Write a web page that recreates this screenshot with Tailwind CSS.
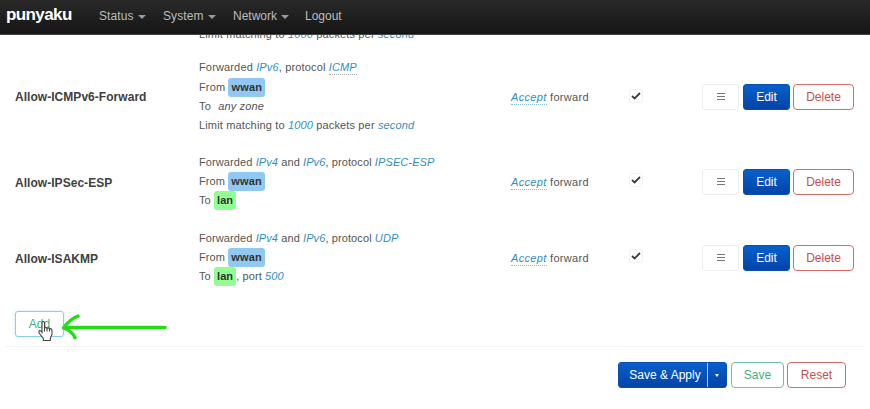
<!DOCTYPE html>
<html lang="en">
<head>
    <meta charset="UTF-8">
    <meta name="viewport" content="width=device-width, initial-scale=1.0">
    <script src="https://cdn.jsdelivr.net/npm/@tailwindcss/browser@4"></script>
    <title>punyaku - Firewall</title>
</head>
<body class="h-[409px] overflow-hidden bg-white font-['Liberation_Sans',Arial,sans-serif] text-[11px] text-[#555]">
    <header class="relative z-10 flex h-[35px] items-center border-b border-[#444] bg-linear-to-b from-[#2a2a2a] to-[#151515] pb-0.5 pl-1.5 text-[12px] text-[#bcbcbc]">
        <a href="#" class="w-[93px] pb-0.5 text-[17px] font-bold tracking-[-0.6px] text-white">punyaku</a>
        <nav class="flex items-center">
            <a href="#" class="flex w-16 items-center gap-1"><span class="tracking-[0.1px]">Status</span><span class="mt-0.5 border-x-4 border-t-4 border-x-transparent border-t-[#999]"></span></a>
            <a href="#" class="flex w-[70px] items-center gap-1"><span class="tracking-[0.1px]">System</span><span class="mt-0.5 border-x-4 border-t-4 border-x-transparent border-t-[#999]"></span></a>
            <a href="#" class="flex w-[72px] items-center gap-1"><span>Network</span><span class="mt-0.5 border-x-4 border-t-4 border-x-transparent border-t-[#999]"></span></a>
            <a href="#">Logout</a>
        </nav>
    </header>

    <main class="-mt-[13px]">
        <!-- tail of the rule that is scrolled under the header -->
        <div class="h-[27.5px] pt-[3px] pl-[199px] leading-[19.33px] tracking-[0.15px]">
            <p>Limit matching to <i class="text-[#2f8fc0]">1000</i> packets per <i class="text-[#2f8fc0]">second</i></p>
        </div>

        <div class="flex h-[95px] items-center pl-[15px]">
            <div class="w-[184px] text-[12px] font-bold tracking-[0.04px] text-[#404040]">Allow-ICMPv6-Forward</div>
            <div class="w-[312px] leading-[19.33px] tracking-[0.15px]">
                <p>Forwarded <i class="text-[#2f8fc0]">IPv6</i>, protocol <i class="inline-block border-b border-dotted border-[#aaa] leading-[14px] text-[#2f8fc0]">ICMP</i></p>
                <p>From <b class="inline-block rounded-[3px] bg-[#90c8f2] px-[3px] leading-[19px] text-[#333]">wwan</b></p>
                <p>To <i class="ml-1">any zone</i></p>
                <p>Limit matching to <i class="text-[#2f8fc0]">1000</i> packets per <i class="text-[#2f8fc0]">second</i></p>
            </div>
            <div class="w-[118px] tracking-[0.33px]"><i class="inline-block border-b border-dotted border-[#8bbdd6] leading-[13px] text-[#2f8fc0]">Accept</i> forward</div>
            <div class="w-[73px]">
                <span class="mb-[3px] flex size-[14px] items-center justify-center rounded-[3px] border border-[#f0f0f0]">
                    <svg class="h-2 w-[10px]" viewBox="0 0 10 8" fill="none" stroke="#3c3c3c" stroke-width="1.8"><path d="M1 4l2.6 2.4L9 1"/></svg>
                </span>
            </div>
            <div class="flex gap-[3px] text-[12px]">
                <button class="mr-px flex h-[26px] w-[37px] items-center justify-center rounded-[3px] border border-[#eee]">
                    <svg class="h-[10px] w-2" viewBox="0 0 8 10" stroke="#777"><path d="M0 1.5h8M0 4.5h8M0 7.5h8"/></svg>
                </button>
                <button class="h-[26px] w-[47px] rounded-[3px] border border-[#0a50b4] bg-linear-to-b from-[#0660cc] to-[#0444a8] text-white">Edit</button>
                <button class="h-[26px] w-[61px] rounded-[4px] border border-[#d66b68] text-[#c4504c]">Delete</button>
            </div>
        </div>

        <div class="flex h-[76px] items-center pl-[15px]">
            <div class="w-[184px] text-[12px] font-bold tracking-[0.04px] text-[#404040]">Allow-IPSec-ESP</div>
            <div class="w-[312px] pb-[2px] leading-[19.33px] tracking-[0.1px]">
                <p>Forwarded <i class="text-[#2f8fc0]">IPv4</i> and <i class="text-[#2f8fc0]">IPv6</i>, protocol <i class="text-[#2f8fc0]">IPSEC-ESP</i></p>
                <p>From <b class="inline-block rounded-[3px] bg-[#90c8f2] px-[3px] leading-[19px] tracking-[0.15px] text-[#333]">wwan</b></p>
                <p>To <b class="inline-block rounded-[3px] bg-[#90ff90] px-[3px] leading-[19px] text-[#333]">lan</b></p>
            </div>
            <div class="w-[118px] tracking-[0.33px]"><i class="inline-block border-b border-dotted border-[#8bbdd6] leading-[13px] text-[#2f8fc0]">Accept</i> forward</div>
            <div class="w-[73px]">
                <span class="mb-[5px] flex size-[14px] items-center justify-center rounded-[3px] border border-[#f0f0f0]">
                    <svg class="h-2 w-[10px]" viewBox="0 0 10 8" fill="none" stroke="#3c3c3c" stroke-width="1.8"><path d="M1 4l2.6 2.4L9 1"/></svg>
                </span>
            </div>
            <div class="flex gap-[3px] pb-px text-[12px]">
                <button class="mr-px flex h-[26px] w-[37px] items-center justify-center rounded-[3px] border border-[#eee]">
                    <svg class="h-[10px] w-2" viewBox="0 0 8 10" stroke="#777"><path d="M0 1.5h8M0 4.5h8M0 7.5h8"/></svg>
                </button>
                <button class="h-[26px] w-[47px] rounded-[3px] border border-[#0a50b4] bg-linear-to-b from-[#0660cc] to-[#0444a8] text-white">Edit</button>
                <button class="h-[26px] w-[61px] rounded-[4px] border border-[#d66b68] text-[#c4504c]">Delete</button>
            </div>
        </div>

        <div class="flex h-[76px] items-center pl-[15px]">
            <div class="w-[184px] text-[12px] font-bold tracking-[0.04px] text-[#404040]">Allow-ISAKMP</div>
            <div class="w-[312px] pb-[2px] leading-[19.33px] tracking-[0.1px]">
                <p>Forwarded <i class="text-[#2f8fc0]">IPv4</i> and <i class="text-[#2f8fc0]">IPv6</i>, protocol <i class="text-[#2f8fc0]">UDP</i></p>
                <p>From <b class="inline-block rounded-[3px] bg-[#90c8f2] px-[3px] leading-[19px] tracking-[0.15px] text-[#333]">wwan</b></p>
                <p>To <b class="inline-block rounded-[3px] bg-[#90ff90] px-[3px] leading-[19px] text-[#333]">lan</b>, port <i class="text-[#2f8fc0]">500</i></p>
            </div>
            <div class="w-[118px] tracking-[0.33px]"><i class="inline-block border-b border-dotted border-[#8bbdd6] leading-[13px] text-[#2f8fc0]">Accept</i> forward</div>
            <div class="w-[73px]">
                <span class="mb-[5px] flex size-[14px] items-center justify-center rounded-[3px] border border-[#f0f0f0]">
                    <svg class="h-2 w-[10px]" viewBox="0 0 10 8" fill="none" stroke="#3c3c3c" stroke-width="1.8"><path d="M1 4l2.6 2.4L9 1"/></svg>
                </span>
            </div>
            <div class="flex gap-[3px] pb-px text-[12px]">
                <button class="mr-px flex h-[26px] w-[37px] items-center justify-center rounded-[3px] border border-[#eee]">
                    <svg class="h-[10px] w-2" viewBox="0 0 8 10" stroke="#777"><path d="M0 1.5h8M0 4.5h8M0 7.5h8"/></svg>
                </button>
                <button class="h-[26px] w-[47px] rounded-[3px] border border-[#0a50b4] bg-linear-to-b from-[#0660cc] to-[#0444a8] text-white">Edit</button>
                <button class="h-[26px] w-[61px] rounded-[4px] border border-[#d66b68] text-[#c4504c]">Delete</button>
            </div>
        </div>

        <div class="relative mt-[14.5px] ml-[15px] flex">
            <button class="h-[26px] w-[49px] rounded-[3px] border border-[#8cd0e8] text-[12px] text-[#3fae84] shadow-[0_0_3px_#b8e4f4]">Add</button>
            <!-- hand pointer -->
            <svg class="absolute top-[9px] left-[23px] h-[22px] w-4" viewBox="0 0 16 22" fill="#fff" stroke="#444" stroke-width="1.1" stroke-linejoin="round">
                <path d="M4 13.5V2.3Q5.2 .6 6.5 2.3V8Q7.8 6.8 9 8.3Q10.4 7.2 11.5 8.8Q13.4 8.2 14 10V14.5L12.3 18V20.5H5.3V18.3L1 13V11Q2.4 10 4 12"/>
                <path d="M6.5 8v3.5M9 8.3v3.2M11.5 8.8v2.7"/>
            </svg>
            <!-- arrow to the Add button -->
            <svg class="absolute top-[2px] left-[46px] h-[27px] w-[108px]" viewBox="0 0 108 27" fill="none" stroke="#22dd11" stroke-width="3.4" stroke-linecap="round" stroke-linejoin="round">
                <path d="M104 14.5H4M17 3Q9 6 2.5 15Q11 18 14 24.8"/>
            </svg>
        </div>
    </main>

    <footer class="mt-[9px] mr-[6px] ml-1.5 flex justify-end gap-[3px] border-t border-[#f3f3f3] pt-[15px] pr-[18px] text-[12px]">
        <div class="mr-px flex h-[26px] w-[109px] rounded-[3px] border border-[#0a50b4] bg-linear-to-b from-[#0660cc] to-[#0444a8] text-white">
            <button class="w-[89px] border-r border-[#bcd4f4] pl-1">Save &amp; Apply</button>
            <button class="flex flex-1 items-center justify-center"><span class="border-x-[2px] border-t-[3px] border-x-transparent border-t-white"></span></button>
        </div>
        <button class="h-[26px] w-[53px] rounded-[4px] border border-[#6cc3a0] text-[#3fae84]">Save</button>
        <button class="h-[26px] w-[59px] rounded-[4px] border border-[#d66b68] text-[#c4504c]">Reset</button>
    </footer>
</body>
</html>
